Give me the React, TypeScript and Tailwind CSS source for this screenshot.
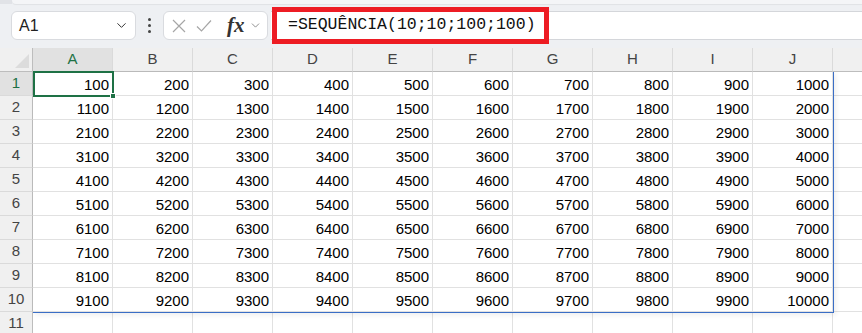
import { ChevronDown } from "lucide-react";

// ── Constants ────────────────────────────────────────────

const COLS = ["A", "B", "C", "D", "E", "F", "G", "H", "I", "J"];
const ROWS = Array.from({ length: 11 }, (_, i) => i + 1);

const cellValue = (row: number, col: number) =>
  row <= 10 ? String(100 + (row - 1) * 1000 + col * 100) : "";

// ── Formula bar ──────────────────────────────────────────

function FormulaBar() {
  return (
    <div className="relative h-[48px] bg-[#eef0f3]">
      {/* ribbon edge */}
      <div className="flex h-[4px]">
        <div className="w-[12px] bg-[#e1e3e7]" />
        <div className="flex-1 rounded-bl-[4px] bg-[#f4f5f7] shadow-[0_1px_1px_rgba(0,0,0,0.06)]" />
      </div>

      <div className="mt-[7px] flex h-[29px] items-center">
        {/* Name box */}
        <div className="ml-[11px] flex h-[29px] w-[125px] items-center justify-between rounded-[6px] border border-[#d9dbdf] bg-white pl-[7px] pr-[6px]">
          <span className="text-[16px] text-[#222]">A1</span>
          <ChevronDown className="h-[15px] w-[15px] text-[#333]" strokeWidth={1.6} />
        </div>

        {/* Dots */}
        <div className="ml-[11px] flex w-[4px] flex-col items-center gap-[3px]">
          <span className="h-[3px] w-[3px] rounded-full bg-[#444]" />
          <span className="h-[3px] w-[3px] rounded-full bg-[#444]" />
          <span className="h-[3px] w-[3px] rounded-full bg-[#444]" />
        </div>

        {/* Cancel / enter / fx */}
        <div className="ml-[12px] flex h-[29px] w-[105px] items-center rounded-[6px] border border-[#d9dbdf] bg-white pl-[8px]">
          <svg width="14" height="14" viewBox="0 0 14 14" className="shrink-0">
            <path d="M1 1 L13 13 M13 1 L1 13" stroke="#a6a6a6" strokeWidth="1.2" fill="none" />
          </svg>
          <svg width="16" height="14" viewBox="0 0 16 14" className="ml-[10px] shrink-0">
            <path d="M1 7.5 L5.5 12 L15 1.5" stroke="#a6a6a6" strokeWidth="1.2" fill="none" />
          </svg>
          <span className="ml-[15px] font-['Liberation_Serif',serif] text-[21px] font-bold italic leading-none text-[#333]">
            fx
          </span>
          <ChevronDown className="ml-[4px] h-[13px] w-[13px] text-[#777]" strokeWidth={1.5} />
        </div>

        {/* Formula input */}
        <div className="ml-[3px] flex h-[29px] flex-1 items-center border-y border-[#d4d6da] bg-white pl-[17px]">
          <span className="font-['Liberation_Mono',monospace] text-[16.5px] text-[#111]">
            =SEQUÊNCIA(10;10;100;100)
          </span>
        </div>
      </div>

      {/* highlight frame */}
      <div className="absolute left-[272px] top-[7px] h-[37px] w-[277px] border-[5px] border-[#ed1c24]" />
    </div>
  );
}

// ── Grid ─────────────────────────────────────────────────

function Grid() {
  return (
    <div className="relative grid grid-cols-[33px_repeat(10,80px)_1fr] font-['Liberation_Sans',Arial,sans-serif]">
      {/* header row */}
      <div className="relative h-[24px] border-b border-r border-[#bdbdbd] bg-[#f0f0f0]">
        <svg width="14" height="14" viewBox="0 0 14 14" className="absolute bottom-[3px] right-[3px]">
          <path d="M14 0 L14 14 L0 14 Z" fill="#dcdcdc" />
        </svg>
      </div>
      {COLS.map((c, i) => (
        <div
          key={c}
          className={`flex h-[24px] items-center justify-center border-b border-r border-b-[#bdbdbd] border-r-[#dadada] text-[15px] ${
            i === 0 ? "bg-[#e1e1e1] text-[#1e7145]" : "bg-[#f0f0f0] text-[#444]"
          }`}
        >
          {c}
        </div>
      ))}
      <div className="h-[24px] border-b border-[#bdbdbd] bg-[#f0f0f0]" />

      {/* body rows */}
      {ROWS.map((r) => (
        <div key={r} className="contents">
          <div
            className={`flex h-[24px] items-center justify-center border-b border-r border-b-[#dadada] border-r-[#bdbdbd] text-[15px] ${
              r === 1 ? "bg-[#e1e1e1] text-[#1e7145]" : "bg-[#f0f0f0] text-[#444]"
            }`}
          >
            {r}
          </div>
          {COLS.map((c, ci) => (
            <div
              key={c}
              className="flex h-[24px] items-end justify-end border-b border-r border-[#e1e1e1] bg-white pb-[2px] pr-[3px] text-[15px] leading-[17px] text-black"
            >
              {cellValue(r, ci)}
            </div>
          ))}
          <div className="h-[24px] border-b border-[#e1e1e1] bg-white" />
        </div>
      ))}

      {/* spill range border */}
      <div className="pointer-events-none absolute left-[33px] top-[24px] h-[241px] w-[801px] border-b border-r border-[#3a6ec6] shadow-[2px_2px_5px_rgba(0,0,0,0.07)]" />

      {/* active cell */}
      <div className="pointer-events-none absolute left-[33px] top-[23px] h-[26px] w-[81px] border-2 border-[#1e7145]">
        <span className="absolute -bottom-[4px] -right-[4px] h-[6px] w-[6px] border border-white bg-[#1e7145]" />
      </div>
    </div>
  );
}

// ── Component ────────────────────────────────────────────

export default function App() {
  return (
    <div className="h-[333px] w-[862px] overflow-hidden bg-white font-['Liberation_Sans',Arial,sans-serif]">
      <FormulaBar />
      <Grid />
    </div>
  );
}
